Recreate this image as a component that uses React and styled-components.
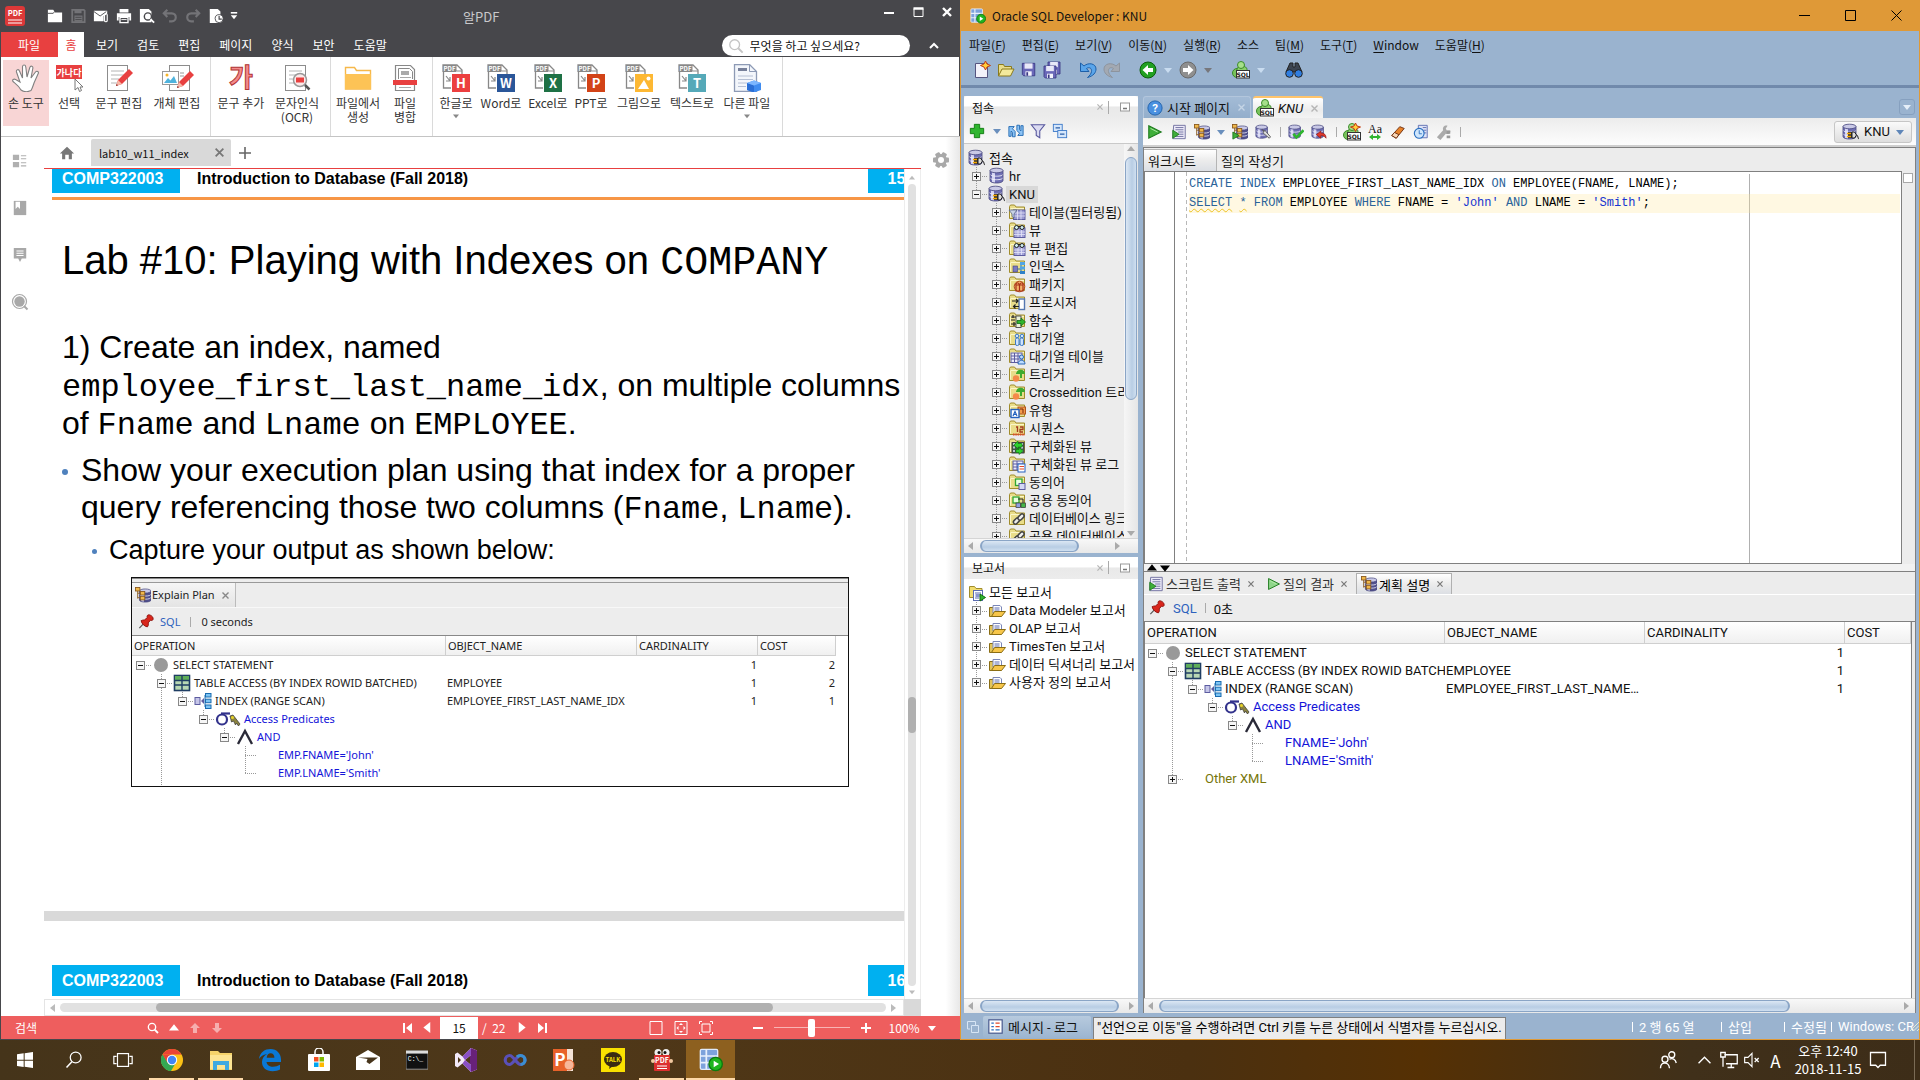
import React from 'react';
import styled, { createGlobalStyle, css } from 'styled-components';

const ui = '"Noto Sans CJK KR", "Noto Sans", sans-serif';
const swing = 'Roboto, "Noto Sans CJK KR", sans-serif';
const doc = '"Liberation Sans", Arial, sans-serif';
const mono = '"Liberation Mono", "Courier New", monospace';

const steel = '#9ab3cf';
const panel = '#ececec';
const line = '#808080';

const GlobalStyle = createGlobalStyle`
  *, *::before, *::after { box-sizing: border-box; }
  body { margin: 0; font-family: ${ui}; font-size: 13px; color: #111; overflow: hidden; }
  button, input, select { font: inherit; color: inherit; margin: 0; }
  button { background: none; border: 0; padding: 0; }
  svg { display: block; flex: none; }
`;

/* ---------- shared ---------- */

const Desktop = styled.div`
  height: 100vh;
  display: grid;
  grid-template-rows: minmax(0, 1fr) 40px;
`;

const Windows = styled.main`
  display: grid;
  grid-template-columns: minmax(0, 1fr) minmax(0, 1fr);
  grid-template-rows: minmax(0, 1fr);
  min-height: 0;
`;

const IconButton = styled.button`
  display: flex;
  align-items: center;
  justify-content: center;
  flex: none;
  width: ${(p) => p.$w || 24}px;
  height: 20px;
`;

const Glyph = ({ s = 18, w, h, box, children }) => (
  <svg width={w || s} height={h || s} viewBox={box || '0 0 18 18'} fill="none" aria-hidden="true">
    {children}
  </svg>
);

const Tri = ({ dir = 'down', c = '#fff', s = 8 }) => {
  const d = {
    down: 'M0 2h8L4 7z',
    up: 'M0 6h8L4 1z',
    left: 'M6 0v8L1 4z',
    right: 'M2 0v8l5-4z',
  }[dir];
  return (
    <svg width={s} height={s} viewBox="0 0 8 8" aria-hidden="true">
      <path d={d} fill={c} />
    </svg>
  );
};

/* ---------- PDF viewer ---------- */

const PdfWindow = styled.section`
  display: grid;
  grid-template-rows: 32px 25px 80px minmax(0, 1fr) 23px;
  background: #fff;
  border: solid #47474b;
  border-width: 0 1px 1px;
  min-width: 0;
  min-height: 0;
`;

const PdfTitle = styled.header`
  display: grid;
  grid-template-columns: 1fr auto 1fr;
  align-items: center;
  background: #47474b;
  color: #c9c9cb;
`;

const QuickBar = styled.div`
  display: flex;
  align-items: center;
  padding-left: 4px;
`;

const Logo = styled.span`
  display: flex;
  margin-right: 18px;
`;

const WindowButtons = styled.div`
  display: flex;
  justify-content: flex-end;
  padding: 0 1px 8px 0;
`;

const PdfMenu = styled.nav`
  display: flex;
  background: #47474b;
  color: #fff;
  font-size: 12px;
`;

const MenuTab = styled.button`
  padding: 0 10px 0 9px;
  ${(p) => p.$kind === 'file' && css`width: 57px; background: #e84040;`}
  ${(p) => p.$kind === 'active' && css`width: 26px; padding: 0; margin-right: 3px; background: #fff; color: #e84040;`}
`;

const SearchPill = styled.label`
  display: flex;
  align-items: center;
  gap: 6px;
  width: 188px;
  height: 21px;
  margin: 3px 12px 0 auto;
  padding: 0 6px;
  border-radius: 11px;
  background: #fff;
`;

const SearchInput = styled.input`
  flex: 1;
  min-width: 0;
  height: 20px;
  border: 0;
  padding: 0;
  background: none;
  font-size: 12px;
  &::placeholder { color: #111; opacity: 1; }
`;

const MenuChevron = styled(IconButton)`
  margin: 4px 16px 0 0;
`;

const Ribbon = styled.div`
  display: flex;
  border-bottom: 1px solid #c4c4c4;
`;

const RibbonGroup = styled.div`
  display: flex;
  padding: 3px 5px 0 2px;
  border-right: 1px solid #dadada;
`;

const RibbonItem = styled.button`
  display: flex;
  flex-direction: column;
  align-items: center;
  width: ${(p) => p.$w}px;
  height: 66px;
  padding-top: 4px;
  font-size: 12px;
  line-height: 14px;
  color: #333;
  white-space: pre;
  background: ${(p) => (p.$active ? '#f8d5d5' : 'none')};
  svg { margin-bottom: 4px; }
  svg + svg { margin: 3px 0 0; }
`;

const PdfBody = styled.div`
  display: grid;
  grid-template-columns: 43px minmax(0, 1fr) 41px;
  grid-template-rows: minmax(0, 1fr);
  min-height: 0;
`;

const SideRail = styled.aside`
  display: flex;
  flex-direction: column;
  align-items: center;
  gap: 27px;
  padding: 14px 5px 0 0;
`;

const RightRail = styled.aside`
  display: flex;
  justify-content: center;
  align-items: flex-start;
  padding-top: 13px;
  background: linear-gradient(90deg, #fff 60%, #e4e4e4);
`;

const Reader = styled.div`
  display: grid;
  grid-template-rows: 31px minmax(0, 1fr);
  min-width: 0;
`;

const DocTabs = styled.div`
  display: flex;
  align-items: center;
`;

const DocTab = styled.div`
  display: flex;
  align-items: center;
  justify-content: space-between;
  width: 140px;
  height: 27px;
  padding: 0 5px 0 8px;
  margin-left: 1px;
  background: #d9d9d9;
  border-radius: 2px 2px 0 0;
  font-size: 11px;
`;

const ReaderView = styled.div`
  display: grid;
  grid-template-columns: minmax(0, 1fr) 17px;
  grid-template-rows: minmax(0, 1fr) 17px;
  border-top: 1px solid #e84040;
  min-height: 0;
`;

const Pages = styled.div`
  display: flex;
  flex-direction: column;
  gap: 10px;
  background: #d9d9d9;
  overflow: hidden;
`;

const Page = styled.article`
  flex: ${(p) => (p.$last ? '0 0 78px' : '1 1 0')};
  min-height: 0;
  overflow: hidden;
  padding-left: 8px;
  padding-top: ${(p) => (p.$last ? 44 : 0)}px;
  background: #fff;
  color: #000;
  font-family: ${doc};
`;

const SlideHeader = styled.header`
  display: grid;
  grid-template-columns: 128px 1fr 36px;
  align-items: center;
  height: ${(p) => (p.$tall ? 31 : 24)}px;
  font-size: 16px;
  line-height: 20px;
  font-weight: bold;
`;

const CourseTag = styled.span`
  height: 100%;
  padding: ${(p) => (p.$tall ? 6 : 0)}px 0 0 ${(p) => (p.$page ? 20 : 10)}px;
  background: #00b0f0;
  color: #fff;
  overflow: hidden;
`;

const CourseTitle = styled.span`
  padding-left: 17px;
  padding-bottom: ${(p) => (p.$tall ? 0 : 4)}px;
`;

const SlideBody = styled.div`
  border-top: 3px solid #f79646;
  margin-top: 4px;
  padding: 36px 0 0 10px;
  font-size: 32px;
  line-height: 37px;
  white-space: nowrap;
`;

const SlideTitle = styled.h1`
  margin: 0 0 44px;
  font-size: 40px;
  line-height: 48px;
  font-weight: normal;
`;

const SlideText = styled.p`
  margin: 0 0 10px;
  line-height: 38px;
`;

const Code = styled.code`
  font-family: ${mono};
  line-height: 1;
`;

const Bullets = styled.ul`
  list-style: none;
  margin: 0;
  padding: 0;
`;

const Bullet = styled.li`
  display: flex;
  align-items: flex-start;
  gap: ${(p) => (p.$sub ? 12 : 13)}px;
  ${(p) => p.$sub && css`margin: 8px 0 0 30px; font-size: 27px; line-height: 32px;`}
  &::before {
    content: '';
    flex: none;
    width: ${(p) => (p.$sub ? 5 : 6)}px;
    height: ${(p) => (p.$sub ? 5 : 6)}px;
    margin-top: ${(p) => (p.$sub ? 15 : 17)}px;
    border-radius: 50%;
    background: #4f81bd;
  }
`;

const Figure = styled.figure`
  width: 718px;
  height: 210px;
  margin: 11px 0 0 69px;
  overflow: hidden;
  border: 1px solid #111;
  background: #fff;
  font: 11px/18px "Noto Sans", sans-serif;
  color: #222;
`;

const FigureTabs = styled.div`
  display: flex;
  height: 30px;
  padding-top: 5px;
  background: linear-gradient(#888 0 1px, #ededed 1px 4px, #999 4px 5px, #ededed 5px);
  border-bottom: 1px solid #f8f8f8;
`;

const FigureTab = styled.div`
  display: flex;
  align-items: center;
  gap: 1px;
  padding: 0 6px 0 3px;
  border: 1px solid #bbb;
  border-width: 0 1px 0 0;
  background: linear-gradient(#f6f6f6, #e4e4e4);
  button { margin-left: 6px; }
`;

const FigureBar = styled.div`
  display: flex;
  align-items: center;
  gap: 6px;
  height: 28px;
  padding-left: 6px;
  background: #ededed;
  border-bottom: 1px solid #888;
`;

const VScroll = styled.div`
  display: flex;
  flex-direction: column;
  align-items: center;
  justify-content: space-between;
  padding: 6px 0 4px;
  gap: 3px;
  background: #fff;
  border: 1px solid #ededed;
  border-width: 0 1px;
`;

const HScroll = styled.div`
  display: flex;
  align-items: center;
  gap: 3px;
  padding: 0 6px 0 4px;
  border: 1px solid #e4e4e4;
`;

const Track = styled.div`
  display: flex;
  flex: 1;
  border-radius: 5px;
  background: #e1e1e1;
  ${(p) => (p.$vertical ? css`width: 8px; flex-direction: column;` : css`height: 9px;`)}
`;

const Before = styled.i`flex: ${(p) => p.$n} 0 0;`;

const Thumb = styled.div`
  flex: ${(p) => p.$n} 0 0;
  border-radius: 5px;
  background: #b0b0b0;
`;

const Corner = styled.div`background: #d9d9d9;`;

const PdfStatus = styled.footer`
  display: flex;
  align-items: center;
  background: #ee5e5e;
  color: #fff;
  font-size: 12px;
  padding: 0 26px 0 14px;
  white-space: nowrap;
`;

const StatusGroup = styled.div`
  display: flex;
  align-items: center;
  gap: ${(p) => p.$gap || 0}px;
  margin-left: ${(p) => p.$left || 0}px;
`;

const PageBox = styled.input`
  width: 38px;
  height: 22px;
  border: 0;
  padding: 0;
  margin: 0 4px;
  text-align: center;
  background: #fff;
  color: #111;
`;

const Zoom = styled.input`
  appearance: none;
  width: 76px;
  height: 18px;
  margin: 0 6px;
  background: linear-gradient(#f9b4b4, #f9b4b4) center / 100% 1px no-repeat;
  &::-webkit-slider-thumb { appearance: none; width: 7px; height: 18px; border-radius: 2px; background: #fff; }
`;

/* ---------- SQL Developer ---------- */

const SqlWindow = styled.section`
  display: grid;
  grid-template-rows: 31px 26px 31px minmax(0, 1fr) 25px;
  border: 1px solid #df9937;
  border-top: 0;
  background: ${steel};
  font-family: ${swing};
  min-width: 0;
  min-height: 0;
`;

const SqlTitle = styled.header`
  display: flex;
  align-items: center;
  gap: 6px;
  padding-left: 9px;
  background: #df9937;
  font-family: ${ui};
  font-size: 12px;
`;

const TitleButtons = styled.div`
  display: flex;
  margin-left: auto;
`;

const SqlMenu = styled.nav`
  display: flex;
  font-family: ${ui};
  font-size: 12px;
`;

const SqlMenuItem = styled.button`
  padding: 0 8px;
  u { text-underline-offset: 2px; }
`;

const MainTools = styled.div`
  display: flex;
  align-items: center;
  padding: 0 0 2px 9px;
  border-bottom: 3px solid #8399b8;
  border-image: linear-gradient(${steel}, #7089ab) 1;
`;

const Gap = styled.i`width: ${(p) => p.$w}px;`;

const SqlBody = styled.div`
  display: grid;
  grid-template-columns: 174px minmax(0, 1fr);
  grid-template-rows: minmax(0, 1fr);
  gap: 5px;
  padding: 8px 1px 1px 3px;
  min-height: 0;
`;

const Docks = styled.div`
  display: grid;
  grid-template-columns: minmax(0, 1fr);
  grid-template-rows: minmax(0, 1fr) minmax(0, 1fr);
  gap: 4px;
  min-height: 0;
`;

const Dock = styled.section`
  display: flex;
  flex-direction: column;
  min-height: 0;
  background: ${(p) => (p.$light ? '#fff' : panel)};
`;

const DockHeader = styled.header`
  display: flex;
  align-items: center;
  flex: none;
  height: 22px;
  padding: 0 2px 0 8px;
  border-radius: 3px 3px 0 0;
  background: linear-gradient(#fff 45%, #e9e9e9 50%, #ececec);
`;

const DockTitle = styled.h2`
  flex: 1;
  margin: 0;
  font-size: 12px;
  font-weight: normal;
`;

const DockTools = styled.div`
  display: flex;
  align-items: center;
  flex: none;
  height: 26px;
  padding-left: 1px;
  background: linear-gradient(#ececec, #fafafa);
  border-bottom: 1px solid #c9c9c9;
`;

const DockBody = styled.div`
  flex: 1;
  display: flex;
  min-height: 0;
`;

const Tree = styled.ul`
  flex: 1;
  min-width: 0;
  margin: 0;
  padding: 5px 0 0;
  list-style: none;
  overflow: hidden;
`;

const TreeRow = styled.li`
  display: flex;
  align-items: center;
  height: 18px;
  padding-left: ${(p) => p.$pad}px;
  white-space: nowrap;
`;

const TreeLabel = styled.span`
  margin-left: ${(p) => p.$gap || 0}px;
  padding: 0 ${(p) => (p.$selected ? 3 : 0)}px;
  line-height: 17px;
  background: ${(p) => (p.$selected ? '#d8d8d8' : 'none')};
`;

const dots = 'repeating-linear-gradient(#999 0 1px, transparent 1px 2px)';
const hdots = 'repeating-linear-gradient(90deg, #999 0 1px, transparent 1px 2px)';

const Branch = styled.span`
  display: flex;
  align-items: center;
  flex: none;
  width: 16px;
  height: 18px;
  background-repeat: no-repeat;
  background-image: ${dots}, ${hdots};
  background-size: 1px ${(p) => ({ full: 18, top: 9, none: 0 }[p.$line])}px, 12px 1px;
  background-position: 4px 0, 4px 9px;
`;

const Guide = styled.span`
  flex: none;
  width: ${(p) => p.$w || 20}px;
  height: 18px;
  background: ${(p) => (p.$on ? dots : 'none')} 4px 0 / 1px 100% no-repeat;
`;

const Expander = styled.button`
  display: flex;
  flex: none;
  width: 9px;
  height: 9px;
  background: #fff;
`;

const JavaScroll = styled.div`
  display: flex;
  flex: none;
  align-items: center;
  justify-content: space-between;
  gap: 4px;
  ${(p) =>
    p.$vertical
      ? css`flex-direction: column; width: 14px; padding: 1px 0; background: linear-gradient(90deg, #f6f6f6, #e6e6e6);`
      : css`height: 15px; padding: 0 ${p.$end || 3}px 0 3px; background: linear-gradient(#f8f8f8, #e8e8e8); border-top: 1px solid #d5d5d5;`}
`;

const JavaTrack = styled.div`
  display: flex;
  flex: 1;
  ${(p) => (p.$vertical ? css`flex-direction: column; width: 12px;` : css`height: 12px;`)}
`;

const JavaThumb = styled.div`
  flex: ${(p) => p.$n} 0 0;
  border: 1px solid #8aa5c6;
  border-width: ${(p) => (p.$vertical ? '1px 1px' : '1px 2px')};
  border-radius: 7px;
  background: linear-gradient(${(p) => (p.$vertical ? '90deg' : '180deg')}, #dbe7f4, #b8cde4 60%, #cfdff0);
`;

const Work = styled.div`
  display: flex;
  flex-direction: column;
  min-width: 0;
  min-height: 0;
`;

const FileTabs = styled.div`
  display: flex;
  flex: none;
  gap: 2px;
  height: 22px;
`;

const FileTab = styled.div`
  display: flex;
  align-items: center;
  gap: 4px;
  padding: 0 5px 0 3px;
  font-style: ${(p) => (p.$active ? 'italic' : 'normal')};
  border: 1px solid #b3c6dc;
  border-width: 1px 1px 0;
  border-radius: 3px 3px 0 0;
  background: linear-gradient(#a3bbd6, #93aecb);
  ${(p) => p.$active && css`
    border: 0;
    border-top: 2px solid #ffc46b;
    background: linear-gradient(#fff, #ececec 60%, #f4f4f4);
  `}
  button { margin-left: 4px; }
`;

const TabMenu = styled(IconButton)`
  margin: 3px 3px 0 auto;
  width: 16px;
  height: 16px;
  border: 1px solid #86a0bf;
  border-radius: 3px;
`;

const WorkBox = styled.div`
  flex: 1;
  display: flex;
  flex-direction: column;
  min-height: 0;
  margin-right: 2px;
  background: ${panel};
`;

const EditTools = styled.div`
  display: flex;
  align-items: center;
  height: 29px;
  flex: none;
  padding: 0 4px 0 0;
  background: linear-gradient(#ececec, #fdfdfd);
  border-bottom: 2px solid #cfcfcf;
`;

const Rule = styled.i`
  flex: none;
  width: 1px;
  height: ${(p) => p.$h || 10}px;
  background: ${(p) => p.$c || '#aaa'};
  margin: 0 ${(p) => p.$m || 0}px;
`;

const ConnPicker = styled.label`
  display: flex;
  align-items: center;
  gap: 4px;
  width: 78px;
  height: 22px;
  margin-left: auto;
  padding: 0 7px;
  border: 1px solid #c6c6c6;
  border-radius: 3px;
  background: linear-gradient(#fafafa, #dedede);
`;

const ConnSelect = styled.select`
  appearance: none;
  flex: 1;
  min-width: 0;
  border: 0;
  padding: 0;
  background: none;
`;

const Frame = styled.div`
  flex: 1;
  display: grid;
  grid-template-columns: minmax(0, 1fr);
  grid-template-rows: minmax(0, 416fr) 8px minmax(0, 440fr);
  min-height: 0;
  border: 1px solid ${line};
`;

const Worksheet = styled.section`
  display: grid;
  grid-template-rows: 23px minmax(0, 1fr);
  min-height: 0;
`;

const SubTabs = styled.div`
  display: flex;
  align-items: flex-end;
`;

const SubTab = styled.button`
  width: ${(p) => p.$w}px;
  height: 22px;
  padding-left: 4px;
  text-align: left;
  ${(p) => p.$active && css`
    border: 1px solid #b5b5b5;
    border-width: 1px 1px 0 0;
    background: linear-gradient(#fff, #ececec 50%, #dcdfe4);
  `}
`;

const EditorRow = styled.div`
  display: grid;
  grid-template-columns: minmax(0, 1fr) 13px;
  min-height: 0;
`;

const Editor = styled.div`
  display: grid;
  grid-template-columns: 30px minmax(0, 1fr);
  border: 1px solid ${line};
  background: #fff;
`;

const Gutter = styled.div`border-right: 1px solid ${line};`;

const Script = styled.div`
  padding: 3px 1px 0 14px;
  overflow: hidden;
  outline: 0;
  font: 12px/19px ${mono};
  white-space: pre;
  color: #000;
  background:
    repeating-linear-gradient(#b8b8b8 0 4px, transparent 4px 7px) 11px 0 / 1px 100% no-repeat,
    linear-gradient(#b0b0b0, #b0b0b0) 574px 2px / 1px 100% no-repeat;
`;

const CodeLine = styled.div`
  height: 19px;
  background: ${(p) => (p.$current ? 'rgba(255, 230, 150, 0.28)' : 'none')};
`;

const Kw = styled.span`
  color: #2a6399;
  text-decoration: ${(p) => (p.$warn ? 'underline wavy #ecc223 1px' : 'none')};
  text-underline-offset: 2px;
`;

const Str = styled.span`color: #1634d0;`;

const Ruler = styled.div`
  padding: 2px 0 0 1px;
  &::before {
    content: '';
    display: block;
    width: 10px;
    height: 10px;
    border: 1px solid #a8a8a8;
    background: #fff;
  }
`;

const Splitter = styled.div`
  display: flex;
  align-items: center;
  gap: 3px;
  padding-left: 3px;
  background: #f2f2f2;
  border-bottom: 1px solid ${line};
`;

const Results = styled.section`
  display: grid;
  grid-template-rows: 23px 27px minmax(0, 1fr) 14px;
  min-height: 0;
`;

const ResultTabs = styled.div`
  display: flex;
  align-items: stretch;
  border-bottom: 1px solid #fff;
  padding-top: 1px;
`;

const ResultTab = styled.div`
  display: flex;
  align-items: center;
  gap: 2px;
  padding: 0 8px 0 4px;
  color: ${(p) => (p.$active ? '#000' : '#333')};
  border-right: 1px solid ${(p) => (p.$active ? '#b0b0b0' : 'transparent')};
  ${(p) => p.$active && css`
    border: 1px solid #b0b0b0;
    border-bottom: 0;
    background: linear-gradient(#fff, #ececec 50%, #dcdfe4);
  `}
  button { margin-left: 5px; }
`;

const ResultTools = styled.div`
  display: flex;
  align-items: center;
  gap: 8px;
  padding-left: 5px;
  border-bottom: 1px solid ${line};
`;

const TextLink = styled.a`
  color: #2d62bd;
  text-decoration: none;
`;

const TableView = styled.div`
  overflow: hidden;
  margin-right: 3px;
  background: #fff;
  border: 1px solid ${line};
  border-width: 0 1px;
`;

const PlanTable = styled.table`
  width: ${(p) => (p.$small ? '704px' : '100%')};
  table-layout: fixed;
  border-collapse: separate;
  border-spacing: 0;
  th {
    height: ${(p) => (p.$small ? 20 : 22)}px;
    padding: 0 2px;
    text-align: left;
    font-weight: normal;
    border: 1px solid #cfcfcf;
    border-width: 0 1px 1px 0;
    background: linear-gradient(#fff, #f0f0f0);
    line-height: 16px;
  }
  td {
    height: 18px;
    padding: 0 6px 0 1px;
    line-height: 18px;
    white-space: nowrap;
    overflow: hidden;
    text-overflow: ellipsis;
  }
  td:first-child { padding: 0 0 0 ${(p) => (p.$small ? 4 : 3)}px; text-overflow: clip; }
  td:nth-child(n + 3) { text-align: right; padding-right: 1px; }
`;

const Col = styled.col`width: ${(p) => p.$w};`;

const PlanCell = styled.div`
  display: flex;
  align-items: center;
  height: 18px;
  overflow: hidden;
  color: ${(p) => p.$tone || 'inherit'};
`;

const PlanIcon = styled.span`
  display: flex;
  flex: none;
  width: ${(p) => p.$w}px;
`;

const SqlStatus = styled.footer`
  display: flex;
  align-items: center;
  color: #fff;
  white-space: nowrap;
`;

const LogButton = styled.button`
  display: flex;
  align-items: center;
  gap: 5px;
  width: 108px;
  height: 22px;
  margin: 0 2px 0 4px;
  padding-left: 5px;
  border-radius: 2px;
  background: linear-gradient(#b7cade, #9cb5d0);
  color: #111;
`;

const Hint = styled.output`
  align-self: flex-end;
  height: 22px;
  padding: 0 3px;
  border: 1px solid ${line};
  border-bottom: 0;
  background: ${panel};
  color: #000;
  line-height: 20px;
`;

const StatusCells = styled.div`
  display: flex;
  margin-left: auto;
`;

const StatusCell = styled.span`
  display: flex;
  align-items: center;
  gap: 6px;
  width: ${(p) => p.$w}px;
`;

/* ---------- taskbar ---------- */

const Taskbar = styled.nav`
  display: flex;
  align-items: stretch;
  background: linear-gradient(90deg, #45341a, #4f3819 30%, #4b3010 62%, #553004 74%, #40301a 88%, #3d2d18);
`;

const TaskButton = styled.button`
  display: flex;
  align-items: center;
  justify-content: center;
  width: 49px;
  padding-top: 2px;
  border-bottom: 2px solid transparent;
  ${(p) => p.$open && css`border-image: linear-gradient(90deg, transparent 4px, #fed9a8 4px 45px, transparent 45px) 2;`}
  ${(p) => p.$active && css`background: #8d601f; border-image: none; border-bottom-color: #fed9a8;`}
`;

const Tray = styled.div`
  display: flex;
  align-items: center;
  margin-left: auto;
  color: #fff;
`;

const TrayButton = styled.button`
  display: flex;
  justify-content: center;
  width: ${(p) => p.$w}px;
  font-size: ${(p) => (p.$big ? 17 : 13)}px;
`;

const Clock = styled.time`
  width: 82px;
  text-align: center;
  font-size: 13px;
  line-height: 18px;
`;

const ShowDesktop = styled.button`
  align-self: stretch;
  width: 6px;
  margin-left: 27px;
  border-left: 1px solid #7a6b55;
`;

/* ---------- drawings ---------- */

const CloseX = ({ c = '#888', s = 7 }) => (
  <svg width={s} height={s} viewBox="0 0 7 7" aria-hidden="true"><path d="M.5.5l6 6m0-6l-6 6" stroke={c} strokeWidth="1.4" /></svg>
);

const Box = ({ open }) => (
  <svg width="9" height="9" viewBox="0 0 9 9" aria-hidden="true">
    <rect x=".5" y=".5" width="8" height="8" fill="#f6f6f6" stroke="#888" />
    <path d={open ? 'M2 4.5h5' : 'M2 4.5h5M4.5 2v5'} stroke="#111" />
  </svg>
);

const Cyl = ({ x = 2, y = 1, c = '#6f6fb4' }) => (
  <g transform={`translate(${x} ${y})`}>
    <path d="M0 2.500v10C0 14 3 15 6.500 15S13 14 13 12.500v-10z" fill={c} />
    <path d="M2 4v10.200c1 .5 2 .7 3 .8V4z" fill="#d5d5f2" />
    <path d="M0 6c0 1.500 3 2.200 6.500 2.200S13 7.500 13 6M0 9.500c0 1.500 3 2.200 6.500 2.200S13 11 13 9.500" stroke="#f0f0fb" strokeWidth=".9" />
    <path d="M0 2.500v10C0 14 3 15 6.500 15S13 14 13 12.500v-10" stroke="#44447c" strokeWidth=".8" />
    <ellipse cx="6.500" cy="2.500" rx="6.500" ry="2.300" fill="#c9c9e6" stroke="#44447c" strokeWidth=".8" />
  </g>
);
const Plug = () => (
  <g><rect x="6" y="9" width="7" height="6" fill="#333" /><path d="M5 10.500h4M5 13.500h4" stroke="#f6a800" strokeWidth="1.300" /><path d="M10 9h2.500l2 3-2 3H10z" fill="#ddd" stroke="#222" /><path d="M14.500 12c2 0 1 4 2.500 4" stroke="#222" /></g>
);
const DbIcon = () => <Glyph><Cyl /></Glyph>;
const DbPlug = () => <Glyph><Cyl x={1} /><Plug /></Glyph>;
const SqlTag = ({ y = 9 }) => (
  <g><rect x="4.500" y={y + 0.5} width="13" height="7.500" fill="#fff" stroke="#333" /><text x="11" y={y + 6.7} fontSize="6" fontWeight="bold" fontStyle="normal" fontFamily="DejaVu Sans" textAnchor="middle" fill="#222">SQL</text></g>
);
const GreenDb = () => (
  <g><ellipse cx="5" cy="12" rx="4.500" ry="4.500" fill="#79c35c" stroke="#3a8a2a" /><ellipse cx="10" cy="8.500" rx="5" ry="3.500" fill="#8bd06c" stroke="#3a8a2a" /><circle cx="9" cy="4" r="3.500" fill="#a6e08a" stroke="#3a8a2a" /></g>
);
const SqlIcon = ({ star }) => <Glyph><GreenDb /><SqlTag />{star && <path d="M12.500 0l1.500 3 3.500 1-3.500 1.500-1.500 3-1.500-3L7.500 4 11 3z" fill="#ffcf3a" stroke="#c43a12" />}</Glyph>;

const overlays = {
  table: <g><rect x="5.500" y="7" width="11.500" height="9.500" fill="#9a9ad2" stroke="#5c5ca0" /><path d="M5.500 10H17M5.500 13H17M9.500 7v9.500M13 7v9.500" stroke="#e5e5f8" strokeWidth=".8" /><path d="M1 7h8l-3 4v4l-2-1.500V11z" fill="#c8d2e6" stroke="#4c5a7c" strokeWidth=".7" /></g>,
  view: <g><rect x="6" y="7" width="11" height="9.500" fill="#a5a5da" stroke="#5c5ca0" /><path d="M6 11h11M6 13.500h11M10 9v7M13.500 9v7" stroke="#e5e5f8" strokeWidth=".8" /><circle cx="8.500" cy="6.500" r="2" fill="#cfeef0" stroke="#222" /><circle cx="14" cy="6.500" r="2" fill="#cfeef0" stroke="#222" /><path d="M10 5.500h2.500" stroke="#222" /></g>,
  index: <g><rect x="5" y="9" width="4.500" height="6" fill="#7a7ac0" stroke="#44447c" strokeWidth=".6" /><path d="M9.500 12H13M13 7v9" stroke="#2e6ea8" /><rect x="12" y="5" width="5" height="3" fill="#4fa5e6" /><rect x="12" y="9.500" width="5" height="3" fill="#4fa5e6" /><rect x="12" y="14" width="5" height="3" fill="#2e80c8" /></g>,
  pack: <g><circle cx="11.500" cy="11.500" r="5.300" fill="#f4b36a" stroke="#b04a1c" /><path d="M8 10h7v6H8zM11.500 9v7M7.500 10c1-3 3-3 4 0 1-3 3-3 4 0" stroke="#a8321a" strokeWidth="1.200" /></g>,
  proc: <g><rect x="11" y="6" width="5.500" height="10.500" fill="#fff" stroke="#5577b0" strokeWidth="1.400" /><path d="M4 8h6m-2-2l2 2-2 2M11 13.500H5.500m2-2l-2 2 2 2" stroke="#222" strokeWidth="1.200" /></g>,
  func: <g><rect x="8" y="5" width="5" height="11.500" fill="#e9efd8" stroke="#555" /><path d="M3 6h5M3 9h4M3 13h5M5 4v3M6 11v4" stroke="#222" strokeWidth="1.200" /><path d="M9 9.500h4V7l4.500 4-4.500 4v-2.500H9z" fill="#2fb52f" stroke="#156b15" strokeWidth=".8" /></g>,
  queue: <g fill="#cfe3fb" stroke="#3a78c8"><circle cx="9" cy="7" r="1.800" /><circle cx="14" cy="7" r="1.800" /><rect x="7.500" y="9" width="3.500" height="7.500" rx="1.500" /><rect x="12" y="9" width="3.500" height="7.500" rx="1.500" /></g>,
  qtable: <g><rect x="3" y="6" width="11" height="9.500" fill="#eaeafa" stroke="#5c5ca0" /><path d="M3 9h11M3 12h11M6.500 6v9.500M10 6v9.500" stroke="#5c5ca0" /><circle cx="13.500" cy="10" r="2" fill="#bcdcff" stroke="#2a68b8" /><path d="M10 17c0-5 7-5 7 0z" fill="#bcdcff" stroke="#2a68b8" /></g>,
  trig: <g><path d="M8 9c0-5 9-6 9 0z" fill="#3eab2f" /><rect x="12" y="9" width="2" height="4" fill="#3eab2f" /><circle cx="8" cy="13.500" r="3.200" fill="#f58a4a" /></g>,
  type: <g><rect x="10" y="6" width="7.500" height="7" fill="#f29a4a" stroke="#b0541c" /><path d="M12 8h3v4" stroke="#7a2a0a" /><rect x="3" y="8.500" width="8" height="8" fill="#fff" stroke="#2461c0" strokeWidth="1.400" /><path d="M5 15l2-4.500L9 15m-3.300-1.500h2.600" stroke="#2461c0" strokeWidth="1.200" /></g>,
  seq: <g><path d="M8 8h1.500v5M12 8h3v2.500h-3V13h3" stroke="#a33a1c" strokeWidth="1.300" /><path d="M5 15.500h12" stroke="#e0482a" strokeWidth="2" strokeDasharray="1.500 .8" /></g>,
  mview: <g><rect x="4" y="5.500" width="12" height="10.500" fill="#3d5c46" stroke="#444" /><path d="M6 6v9M14 6v9" stroke="#dfe8f8" strokeWidth="1.500" strokeDasharray="2 1.500" /><path d="M6 8l4-4v2.500h4V10h-4v2z" fill="#2fd02f" stroke="#0d7a0d" strokeWidth=".6" /><path d="M15 14l-4 3.500v-2H8v-3h3v-2z" fill="#2fd02f" stroke="#0d7a0d" strokeWidth=".6" /></g>,
  mlog: <g><rect x="5" y="6" width="10" height="9" fill="#e9e9fb" stroke="#5c5ca0" /><path d="M5 9h10M5 12h10M9 6v9" stroke="#5c5ca0" /><rect x="10" y="9" width="7" height="8" fill="#fff" stroke="#2461c0" /><path d="M11.500 11.500H16M11.500 14H16" stroke="#e0482a" strokeWidth="1.200" /></g>,
  syn: <g><rect x="7.500" y="6" width="6.500" height="6.500" fill="#e8ffe0" stroke="#2fa52f" strokeWidth="1.300" /><rect x="11" y="10.500" width="6" height="6" fill="#d5d8f5" stroke="#5c5ca0" /></g>,
  psyn: <g><rect x="5" y="6" width="6" height="6" fill="#e8ffe0" stroke="#2fa52f" strokeWidth="1.300" /><path d="M10 8h5v4" stroke="#222" /><rect x="8" y="12" width="4.500" height="4.500" fill="#8fa0e0" stroke="#333" strokeWidth=".7" /><rect x="13" y="12" width="4.500" height="4.500" fill="#46b546" stroke="#333" strokeWidth=".7" /></g>,
  link: <g stroke="#444" strokeWidth="1.500"><rect x="5" y="10" width="7" height="4" rx="2" transform="rotate(-45 8.500 12)" fill="#eee" /><rect x="9.500" y="6" width="7" height="4" rx="2" transform="rotate(-45 13 8)" fill="#eee" /></g>,
};

const Folder = ({ kind }) => (
  <Glyph>
    <path d="M1.500 15.500v-12l1-1.500h4l1.500 2h8.500v11.500z" fill="#e9dd8a" stroke="#a08c2c" />
    <path d="M2.500 5.500v9M3 5.500h13" stroke="#fbf6c8" />
    {overlays[kind]}
  </Glyph>
);

const ReportFolder = () => (
  <Glyph>
    <path d="M1.500 14.500v-9h5l1 1.500h6v7z" fill="#e3c55a" stroke="#8a6d14" />
    <path d="M5 3.500h7l1.500 1.500v6H5z" fill="#fff" stroke="#7a86b8" /><path d="M6.500 6h5M6.500 8h5" stroke="#5b6bb0" />
    <path d="M3.500 14.500l3-5h11l-4 5z" fill="#f7c64a" stroke="#8a6d14" />
  </Glyph>
);
const AllReports = () => (
  <Glyph>
    <path d="M1.500 13.500v-11h5l1.500 2h6v9z" fill="#f2dd6e" stroke="#a08c2c" />
    <rect x="5.500" y="6.500" width="9" height="10" fill="#fff" stroke="#5b6bb0" /><path d="M7 9h6M7 14h4" stroke="#5b6bb0" /><rect x="7.500" y="10" width="4" height="3" fill="#8a94d0" />
    <path d="M12 10l5.500 3.500L12 17z" fill="#2fb52f" stroke="#0d6b0d" />
  </Glyph>
);

const Run = ({ s = 18, c = '#3fae3a' }) => <Glyph s={s}><path d="M2 2l14 7-14 7z" fill={c} stroke="#1d7a1d" strokeWidth="1.200" /><path d="M4 5l8 4" stroke="#b8efae" /></Glyph>;
const ScriptIcon = ({ s = 18 }) => (
  <Glyph s={s}><path d="M3 1.500h13v15H2z" fill="#eceaf8" stroke="#6a6a9c" /><path d="M5 4h9M5 6.500h9M8 9h6M9 11.500h5M5 14h9" stroke="#6a6a9c" /><path d="M2 7l7 4.500L2 16z" fill="#3fae3a" stroke="#1d7a1d" /></Glyph>
);
const PlanIco = ({ play, s = 18 }) => (
  <Glyph s={s}>
    <Cyl x={5} y={2} c="#50508c" />
    <path d="M3 4v9M3 7h5M3 12h5" stroke="#8a5a20" /><rect x=".5" y=".5" width="5" height="4" fill="#f0b84a" stroke="#8a5a20" /><rect x="6" y="5" width="5" height="4" fill="#f0b84a" stroke="#8a5a20" /><rect x="6" y="10.500" width="5" height="4" fill="#f0b84a" stroke="#8a5a20" />
    {play && <path d="M1 9l7 4-7 4z" fill="#3fae3a" stroke="#1d7a1d" />}
  </Glyph>
);
const Pin = () => (
  <Glyph s={16}><path d="M1.500 16l5-5.500" stroke="#555" strokeWidth="1.300" /><path d="M3.500 7.500c2-1 3.500-.5 4-1L10.500 4C9.500 2 11 .5 13 1c2.500.5 4.500 3 4 5-.500 1.500-2 1.500-3 1l-2.500 3c.5 2 0 3.500-1 4.500-3-.5-6.500-3.500-7-7z" fill="#d8261c" stroke="#8a0f0a" /></Glyph>
);
const Disk = ({ x = 1.5, y = 1.5, s = 14 }) => (
  <g transform={`translate(${x} ${y}) scale(${s / 14})`}><path d="M0 0h14v14H1.500L0 12.500z" fill="#6a68b8" stroke="#3a3884" /><rect x="2.500" y="0" width="9" height="6" fill="#e8e8f8" /><rect x="3.500" y="9" width="7" height="5" fill="#f4f4fc" /><rect x="4.500" y="10" width="2" height="4" fill="#3a3884" /></g>
);
const Round = ({ c, d, left }) => (
  <Glyph><circle cx="9" cy="9" r="8" fill={c} stroke={d} /><path d={left ? 'M3.500 9L9 4v3h5v4H9v3z' : 'M14.500 9L9 4v3H4v4h5v3z'} fill="#fff" /></Glyph>
);
const Curl = ({ c, d, flip }) => (
  <Glyph><path transform={flip ? 'matrix(-1 0 0 1 18 0)' : undefined} d="M1.500 2v8.500H10L7.500 7.500c3-2 5.500 0 5 3-.300 2-1.500 4-4 6 6-1.500 8.500-5 8.500-8.500C17 2.500 9.500 1 5 5z" fill={c} stroke={d} /></Glyph>
);

/* quick access */
const w = '#fff';
const QOpen = () => <Glyph s={16}><path d="M1 16V2h6l2 3h8v11z" fill={w} /><path d="M1 6h6l1.500-2" stroke="#47474b" /></Glyph>;
const QSave = ({ c = '#737377' }) => <Glyph s={16}><path d="M2.500 2h13l1 1v13h-14z" stroke={c} strokeWidth="2" /><path d="M5 2h8v4H5zM5 8.500h9v7H5z" fill={c} /><path d="M6 10.500h7M6 13h7" stroke="#47474b" /></Glyph>;
const QMail = () => <Glyph s={16}><path d="M1 3h15v4l-4 2v6H1z" fill={w} /><path d="M1 4l7 5 7-5" stroke="#47474b" /><path d="M13 8v6a1.500 1.500 0 003 0V7" stroke={w} strokeWidth="1.300" /></Glyph>;
const QPrint = () => <Glyph s={16}><path d="M4 1h10v4H4zM1 6h16v8h-2v-4H3v4H1z" fill={w} /><path d="M4.500 10.500h9v6h-9z" stroke={w} strokeWidth="1.500" /><path d="M6 13h6" stroke={w} /></Glyph>;
const QFind = () => <Glyph s={16}><path d="M1 1h10l3 3v12H1z" fill={w} /><circle cx="10" cy="9.500" r="4" fill={w} stroke="#47474b" strokeWidth="1.600" /><path d="M13 12.500l4 4" stroke={w} strokeWidth="2" /></Glyph>;
const QTurn = ({ flip }) => <Glyph s={16}><path transform={flip ? 'matrix(-1 0 0 1 18 0)' : undefined} d="M6 2L2 6l4 4M2 6h9c6 0 6 9 0 9H8" stroke="#737377" strokeWidth="2.400" /></Glyph>;
const QClock = () => <Glyph s={16}><path d="M2 1h9l3 3v13H2z" fill={w} /><circle cx="12.500" cy="12" r="4.500" fill={w} stroke="#47474b" /><path d="M12.500 9v3.500h3" stroke="#47474b" strokeWidth="1.300" /></Glyph>;
const QMore = () => <Glyph s={8} box="0 0 8 10"><path d="M0 1h8" stroke={w} strokeWidth="2" /><path d="M0 4h8L4 9z" fill={w} /></Glyph>;

/* ribbon drawings share a 28 unit canvas */
const Rib = ({ children, wide = 28 }) => <Glyph w={wide} h={28} box={`0 0 ${wide} 28`}>{children}</Glyph>;
const PaperLines = ({ x = 3 }) => <g stroke="#8c8c8c"><rect x={x + 0.5} y="1.500" width="20" height="25" fill="#fff" /><path d={`M${x + 4} 7h13M${x + 4} 11h13M${x + 4} 15h8M${x + 4} 19h6`} stroke="#b4b4b4" /></g>;
const Pencil = () => <g transform="translate(10 5)"><path d="M1 17l2-6L14 0l4 4L7 15z" fill="#e84040" /><path d="M1 17l2-6 4 4z" fill="#f7b9a8" /><path d="M1 17l.7-2 1.300 1.300z" fill="#7a1c1c" /></g>;
const HandIcon = () => <Rib><path d="M9 26c-2-4-5-6-8-8.500-1.200-1.600.8-3 2.600-2L8 18 4.500 8c-.6-2.400 2.200-3.200 3-1l3 7L10.500 3c0-2.600 3-2.600 3.300 0L15 13l2.800-9.500c.8-2.300 3.600-1.500 3 1L19 14l4.500-6c1.500-1.700 3.700-.2 2.600 1.800L22 19c-1 3-1.500 5-3 7.500-3 1.500-7 1.500-10-.5z" fill="#fff" stroke="#808080" strokeWidth="1.100" /></Rib>;
const SelectIcon = () => <Rib><rect x="1" y="1" width="26" height="14" fill="#e84040" /><text x="14" y="12" fontSize="9" fontWeight="bold" textAnchor="middle" fill="#fff">가나다</text><path d="M20 15v11l3-2.500 1.500 4 2-1-1.500-3.500h3z" fill="#fff" stroke="#777" /></Rib>;
const TextEdit = () => <Rib><PaperLines x={2} /><Pencil /></Rib>;
const ObjEdit = () => <Rib wide={34}><rect x="9.500" y="1.500" width="20" height="25" fill="#fff" stroke="#8c8c8c" /><rect x="2.500" y="7.500" width="16" height="13" fill="#fff" stroke="#999" /><circle cx="7" cy="11" r="1.500" fill="#f6b52a" /><path d="M4 19l4-5 2.500 2.500L14 12l3 7z" fill="#4fb3dd" /><path d="M20 9h4M20 12h4" stroke="#999" /><g transform="translate(6 2)"><Pencil /></g></Rib>;
const TextAdd = () => <Rib><text x="14" y="23" fontSize="26" fontWeight="bold" textAnchor="middle" fill="#f58a8a" stroke="#b03535" strokeWidth="1">가</text></Rib>;
const Ocr = () => <Rib><PaperLines x={2} /><circle cx="17" cy="16" r="6.500" fill="#fbe9e9" stroke="#999" strokeWidth="1.500" /><rect x="13" y="13.500" width="8" height="5" fill="#e84040" /><path d="M22 21l4.500 4.500" stroke="#555" strokeWidth="2.500" /></Rib>;
const FolderBig = () => <Rib><path d="M1.500 25V3.500h9l2 3h14V25z" fill="#fff" stroke="#f6b84a" strokeWidth="1.400" /><path d="M1 10h26v15H1z" fill="#fdc356" /></Rib>;
const Merge = () => <Rib><path d="M4.500 16V1.500h15l4 4V16M4.500 21v5.500h19V21" fill="none" stroke="#888" strokeWidth="1.200" /><path d="M7.500 15V4.500h11l3 3V15" stroke="#888" /><rect x="10" y="7" width="8" height="4" fill="#aaa" /><path d="M9 13.500h11M8 23.500h12" stroke="#aaa" /><rect x="2" y="16" width="24" height="5" fill="#e84040" /></Rib>;
const PdfTo = ({ c, t, pic }) => (
  <Rib>
    <path d="M1 8V1h14l5 5v5M1.500 8v16H9" stroke="#888" strokeWidth="1.300" /><path d="M14 1v6h6" stroke="#888" /><rect x="1" y="1" width="13" height="7" fill="#888" /><text x="7.500" y="7" fontSize="6" fontWeight="bold" textAnchor="middle" fill="#fff">PDF</text>
    <path d="M4 12l4 5m0-4v4H4" stroke="#888" strokeWidth="1.200" />
    <rect x="10" y="10" width="18" height="18" fill={c} />
    {pic ? <g fill="#fff"><path d="M13 25l6-9 5 9z" /><circle cx="23.500" cy="14.500" r="2" /></g> : <text x="19" y="24" fontSize="13" fontWeight="bold" textAnchor="middle" fill="#fff">{t}</text>}
  </Rib>
);
const OtherFile = () => <Rib><path d="M1.500.5h15l7 7v20h-22z" fill="#f3f6fb" stroke="#8d9ab5" strokeWidth="1.300" /><path d="M16.500.5v7h7" stroke="#8d9ab5" /><rect x="5" y="4" width="9" height="3" fill="#77809a" /><path d="M5 12h15M5 15.500h15M5 19h9M5 22.500h8" stroke="#b6c0d4" /><path d="M14 19l7-2.500 7 2.500v7L21 28.500 14 26z" fill="#3f8cf0" /><path d="M14 19l7 2.500v7L14 26z" fill="#2a6fd6" /><path d="M14 19l7-2.500 7 2.500-7 2.500z" fill="#7bb6ff" /></Rib>;

const ribbonGroups = [
  [
    { t: '손 도구', w: 46, i: <HandIcon />, active: true },
    { t: '선택', w: 40, i: <SelectIcon /> },
    { t: '문구 편집', w: 60, i: <TextEdit /> },
    { t: '개체 편집', w: 56, i: <ObjEdit /> },
  ],
  [
    { t: '문구 추가', w: 56, i: <TextAdd /> },
    { t: '문자인식\n(OCR)', w: 56, i: <Ocr /> },
  ],
  [
    { t: '파일에서\n생성', w: 50, i: <FolderBig /> },
    { t: '파일\n병합', w: 44, i: <Merge /> },
  ],
  [
    { t: '한글로', w: 42, i: <PdfTo c="#ec3f3f" t="H" />, more: true },
    { t: 'Word로', w: 48, i: <PdfTo c="#2a5699" t="W" /> },
    { t: 'Excel로', w: 46, i: <PdfTo c="#1e7145" t="X" /> },
    { t: 'PPT로', w: 40, i: <PdfTo c="#d24317" t="P" /> },
    { t: '그림으로', w: 56, i: <PdfTo c="#fdb833" pic /> },
    { t: '텍스트로', w: 50, i: <PdfTo c="#55a9b8" t="T" /> },
    { t: '다른 파일', w: 60, i: <OtherFile />, more: true },
  ],
];

const Glass = ({ s = 16, c = '#b0b0b0', bw = 1.5 }) => <Glyph s={s}><circle cx="7.500" cy="7.500" r="5.500" stroke={c} strokeWidth={bw} /><path d="M11.500 11.500l5 5" stroke={c} strokeWidth={bw * 1.4} /></Glyph>;

/* plan rows */
const Dot = () => <Glyph><circle cx="9" cy="9" r="7" fill="#999" /></Glyph>;
const TableIco = () => <Glyph><rect x="1.500" y="1.500" width="15" height="15" fill="#b9d8b4" stroke="#1f3d63" strokeWidth="1.600" /><rect x="2" y="2" width="14" height="4" fill="#5fae5a" /><path d="M9 2v14M2 6.500h14M2 11h14" stroke="#1f3d63" strokeWidth="1.400" /></Glyph>;
const IndexIco = () => <Glyph><rect x="1" y="5.500" width="5" height="7" fill="#c5c5e8" stroke="#5c5ca0" /><path d="M7 9l3-3v6z" fill="#5c5ca0" /><path d="M11 3v12" stroke="#2277bb" /><g fill="#7cc4f4" stroke="#1a6cb0"><rect x="11.500" y="1.500" width="5.500" height="3.500" /><rect x="11.500" y="7.200" width="5.500" height="3.500" /><rect x="11.500" y="13" width="5.500" height="3.500" /></g></Glyph>;
const SigmaKey = () => <Glyph w={26} h={18} box="0 0 26 18"><circle cx="7" cy="9.500" r="5" stroke="#33338c" strokeWidth="2.200" /><path d="M6 3.500h9" stroke="#33338c" strokeWidth="2.200" /><path d="M15 6l3-1 7 9-1.500 2-2-3-1 2-2-4-2 1z" fill="#8c8440" stroke="#333" strokeWidth=".7" /><circle cx="17.500" cy="7.500" r="1.500" fill="#e8d428" /></Glyph>;
const AndIco = () => <Glyph><path d="M2 16L9 3l7 13" stroke="#2a2a38" strokeWidth="2.400" /></Glyph>;

const blue = '#1414d8';
const planRows = (pre) => [
  { depth: 0, line: 'none', open: true, i: <Dot />, iw: 21, t: 'SELECT STATEMENT' },
  { depth: 1, line: 'full', open: true, i: <TableIco />, iw: 21, t: 'TABLE ACCESS (BY INDEX ROWID BATCHED)' },
  { depth: 2, line: 'top', open: true, i: <IndexIco />, iw: 21, t: 'INDEX (RANGE SCAN)' },
  { depth: 3, line: 'top', open: true, i: <SigmaKey />, iw: 29, t: 'Access Predicates', tone: blue },
  { depth: 4, line: 'top', open: true, i: <AndIco />, iw: 21, t: 'AND', tone: blue },
  { depth: 5, line: 'full', leaf: true, iw: 21, t: `${pre}FNAME='John'`, tone: blue },
  { depth: 5, line: 'top', leaf: true, iw: 21, t: `${pre}LNAME='Smith'`, tone: blue },
  { depth: 1, line: 'top', iw: 21, t: 'Other XML', tone: '#76760a' },
];

/* only the first level has a later sibling, so only its column carries a guide */
const guidesFor = (depth) => Array.from({ length: depth }, (_, n) => n === 1);

function Plan({ pre = '', small, widths, data, step }) {
  return (
    <PlanTable $small={small}>
      <colgroup>{widths.map((x, n) => <Col key={n} $w={x} />)}</colgroup>
      <thead>
        <tr><th scope="col">OPERATION</th><th scope="col">OBJECT_NAME</th><th scope="col">CARDINALITY</th><th scope="col">COST</th></tr>
      </thead>
      <tbody>
        {planRows(pre).map((r, n) => (
          <tr key={n}>
            <td>
              <PlanCell $tone={r.tone}>
                {guidesFor(r.depth).map((on, k) => <Guide key={k} $w={step} $on={on} />)}
                <Branch $line={r.line}>
                  {!r.leaf && <Expander aria-label={r.t}><Box open={r.open} /></Expander>}
                </Branch>
                <PlanIcon $w={r.iw}>{r.i}</PlanIcon>
                {r.t}
              </PlanCell>
            </td>
            <td>{(data[n] || [])[0]}</td>
            <td>{(data[n] || [])[1]}</td>
            <td>{(data[n] || [])[2]}</td>
          </tr>
        ))}
      </tbody>
    </PlanTable>
  );
}

/* ---------- left window ---------- */

function PdfViewer() {
  return (
    <PdfWindow>
      <PdfTitle>
        <QuickBar>
          <Logo>
            <svg width="20" height="20" viewBox="0 0 20 20" aria-hidden="true"><rect width="20" height="20" rx="3" fill="#dc3838" /><text x="10" y="10" fontSize="7.500" fontWeight="bold" textAnchor="middle" fill="#fff">PDF</text><path d="M3 14h14M3 17h14" stroke="#fff" /></svg>
          </Logo>
          {[['열기', <QOpen />], ['저장', <QSave />], ['메일', <QMail />], ['인쇄', <QPrint />], ['찾기', <QFind />], ['실행 취소', <QTurn />], ['다시 실행', <QTurn flip />], ['기록', <QClock />]].map(([l, i]) => (
            <IconButton key={l} $w={23} aria-label={l}>{i}</IconButton>
          ))}
          <IconButton $w={14} aria-label="더 보기"><QMore /></IconButton>
        </QuickBar>
        <span>알PDF</span>
        <WindowButtons>
          <IconButton $w={29} aria-label="최소화"><Glyph s={12} box="0 0 12 12"><path d="M1 7h10" stroke="#fff" strokeWidth="2" /></Glyph></IconButton>
          <IconButton $w={29} aria-label="최대화"><Glyph s={12} box="0 0 12 12"><path d="M2 2.500h9v8H2z" stroke="#fff" /><path d="M1.500 2.500h10" stroke="#fff" strokeWidth="2.500" /></Glyph></IconButton>
          <IconButton $w={28} aria-label="닫기"><Glyph s={12} box="0 0 12 12"><path d="M2 2l8 8m0-8l-8 8" stroke="#fff" strokeWidth="2.400" /></Glyph></IconButton>
        </WindowButtons>
      </PdfTitle>

      <PdfMenu>
        <MenuTab $kind="file">파일</MenuTab>
        <MenuTab $kind="active">홈</MenuTab>
        {['보기', '검토', '편집', '페이지', '양식', '보안', '도움말'].map((t) => <MenuTab key={t}>{t}</MenuTab>)}
        <SearchPill>
          <Glass c="#c4c4c4" />
          <SearchInput placeholder="무엇을 하고 싶으세요?" aria-label="무엇을 하고 싶으세요?" />
        </SearchPill>
        <MenuChevron aria-label="리본 접기"><Glyph s={10} box="0 0 10 10"><path d="M1 7l4-4 4 4" stroke="#fff" strokeWidth="2" /></Glyph></MenuChevron>
      </PdfMenu>

      <Ribbon>
        {ribbonGroups.map((g, n) => (
          <RibbonGroup key={n}>
            {g.map((b) => (
              <RibbonItem key={b.t} $w={b.w} $active={b.active}>{b.i}{b.t}{b.more && <Tri c="#888" s={6} />}</RibbonItem>
            ))}
          </RibbonGroup>
        ))}
      </Ribbon>

      <PdfBody>
        <SideRail>
          <IconButton aria-label="축소판"><Glyph s={16}><path d="M1 2h7v6H1zM1 10h7v6H1z" fill="#b0b0b0" /><path d="M10 3h6M10 6.500h6M10 11h6M10 14.500h6" stroke="#b0b0b0" strokeWidth="1.200" /></Glyph></IconButton>
          <IconButton aria-label="책갈피"><Glyph s={16}><path d="M2 1h14v16H2z" fill="#a8a8a8" /><path d="M4 2h5v8L6.500 7.500 4 10z" fill="#fff" /></Glyph></IconButton>
          <IconButton aria-label="주석"><Glyph s={16}><path d="M2 1h14v12h-5l-2 4-2-4H2z" fill="#a8a8a8" /><path d="M5 4.500h8M5 7h8M5 9.500h8" stroke="#fff" strokeWidth="1.200" /></Glyph></IconButton>
          <IconButton aria-label="검색"><Glyph s={18}><circle cx="8.500" cy="8.500" r="7" stroke="#a8a8a8" strokeWidth="1.200" /><circle cx="8.500" cy="8.500" r="5.200" fill="#a8a8a8" /><path d="M13 13l3.500 3.500" stroke="#a8a8a8" strokeWidth="2" /></Glyph></IconButton>
        </SideRail>

        <Reader>
          <DocTabs>
            <IconButton $w={46} aria-label="홈"><Glyph s={16}><path d="M1 9.500L9 2l8 7.500h-2.500V16H11v-5H7v5H3.500V9.500z" fill="#777" /></Glyph></IconButton>
            <DocTab>lab10_w11_index<IconButton $w={14} aria-label="탭 닫기"><CloseX s={9} c="#777" /></IconButton></DocTab>
            <IconButton $w={28} aria-label="새 탭"><Glyph s={12} box="0 0 12 12"><path d="M6 0v12M0 6h12" stroke="#666" strokeWidth="1.600" /></Glyph></IconButton>
          </DocTabs>
          <ReaderView>
            <Pages>
              <Page>
                <SlideHeader>
                  <CourseTag>COMP322003</CourseTag>
                  <CourseTitle>Introduction to Database (Fall 2018)</CourseTitle>
                  <CourseTag $page>15</CourseTag>
                </SlideHeader>
                <SlideBody>
                  <SlideTitle>Lab #10: Playing with Indexes on <Code>COMPANY</Code></SlideTitle>
                  <SlideText>
                    1) Create an index, named<br />
                    <Code>employee_first_last_name_idx</Code>, on multiple columns<br />
                    of <Code>Fname</Code> and <Code>Lname</Code> on <Code>EMPLOYEE</Code>.
                  </SlideText>
                  <Bullets>
                    <Bullet><span>Show your execution plan using that index for a proper<br />query referencing those two columns (<Code>Fname</Code>, <Code>Lname</Code>).</span></Bullet>
                    <Bullet $sub><span>Capture your output as shown below:</span></Bullet>
                  </Bullets>
                  <Figure>
                    <FigureTabs>
                      <FigureTab><PlanIco s={16} />Explain Plan<button aria-label="닫기"><CloseX /></button></FigureTab>
                    </FigureTabs>
                    <FigureBar><Pin /><TextLink href="#sql">SQL</TextLink><Rule $m={4} />0 seconds</FigureBar>
                    <Plan
                      small
                      step={21}
                      pre="EMP."
                      widths={['314px', '191px', '121px', '78px']}
                      data={[['', 1, 2], ['EMPLOYEE', 1, 2], ['EMPLOYEE_FIRST_LAST_NAME_IDX', 1, 1]]}
                    />
                  </Figure>
                </SlideBody>
              </Page>
              <Page $last>
                <SlideHeader $tall>
                  <CourseTag $tall>COMP322003</CourseTag>
                  <CourseTitle $tall>Introduction to Database (Fall 2018)</CourseTitle>
                  <CourseTag $tall $page>16</CourseTag>
                </SlideHeader>
              </Page>
            </Pages>
            <VScroll>
              <Tri dir="up" c="#bbb" s={6} />
              <Track $vertical><Before $n={512} /><Thumb $n={36} /><Before $n={253} /></Track>
              <Tri c="#bbb" s={6} />
            </VScroll>
            <HScroll>
              <Tri dir="left" c="#bbb" s={8} />
              <Track><Before $n={96} /><Thumb $n={616} /><Before $n={112} /></Track>
              <Tri dir="right" c="#bbb" s={8} />
            </HScroll>
            <Corner />
          </ReaderView>
        </Reader>

        <RightRail>
          <IconButton aria-label="설정"><Glyph s={18}><g fill="#a8a8a8"><circle cx="9" cy="9" r="6" />{[0, 60, 120].map((a) => <rect key={a} x="6.500" y="1" width="5" height="16" rx="1" transform={`rotate(${a + 30} 9 9)`} />)}</g><circle cx="9" cy="9" r="3" fill="#fff" /></Glyph></IconButton>
        </RightRail>
      </PdfBody>

      <PdfStatus>
        검색
        <StatusGroup $gap={10} $left={110}>
          <Glass s={12} c="#fff" bw={2} />
          <Tri dir="up" s={10} />
          <Glyph s={12} box="0 0 12 12"><path d="M6 1l5 5H8v5H4V6H1z" fill="#f6aeae" /></Glyph>
          <Glyph s={12} box="0 0 12 12"><path d="M6 11L1 6h3V1h4v5h3z" fill="#f6aeae" /></Glyph>
        </StatusGroup>
        <StatusGroup $left={175}>
          <IconButton $w={20} aria-label="첫 페이지"><Glyph s={10} box="0 0 10 10"><path d="M0 0h2v10H0zM9 0v10L3 5z" fill="#fff" /></Glyph></IconButton>
          <IconButton $w={18} aria-label="이전 페이지"><Tri dir="left" s={11} /></IconButton>
          <PageBox defaultValue="15" aria-label="페이지" />
          <span>/ &nbsp;22</span>
          <StatusGroup $left={6}>
            <IconButton $w={20} aria-label="다음 페이지"><Tri dir="right" s={11} /></IconButton>
            <IconButton $w={20} aria-label="마지막 페이지"><Glyph s={10} box="0 0 10 10"><path d="M8 0h2v10H8zM1 0v10l6-5z" fill="#fff" /></Glyph></IconButton>
          </StatusGroup>
        </StatusGroup>
        <StatusGroup $gap={1} $left={92}>
          <IconButton aria-label="실제 크기"><Glyph s={14} box="0 0 14 14"><path d="M1 .5h12v13H1z" stroke="#fff" /></Glyph></IconButton>
          <IconButton aria-label="창에 맞춤"><Glyph s={14} box="0 0 14 14"><path d="M1 .5h12v13H1z" stroke="#fff" /><path d="M7 2l2 2H5zM7 12l2-2H5zM2.500 7l2-2v4zM11.500 7l-2-2v4z" fill="#fff" /></Glyph></IconButton>
          <IconButton aria-label="너비에 맞춤"><Glyph s={14} box="0 0 14 14"><path d="M3 3h8v8H3z" stroke="#fff" /><path d="M.5 3V.5H3M11 .5h2.500V3M13.500 11v2.500H11M3 13.500H.5V11" stroke="#fff" /></Glyph></IconButton>
        </StatusGroup>
        <StatusGroup $left={30}>
          <IconButton $w={20} aria-label="축소"><Glyph s={10} box="0 0 10 10"><path d="M0 5h10" stroke="#fff" strokeWidth="2" /></Glyph></IconButton>
          <Zoom type="range" defaultValue="50" aria-label="확대 비율" />
          <IconButton $w={20} aria-label="확대"><Glyph s={10} box="0 0 10 10"><path d="M0 5h10M5 0v10" stroke="#fff" strokeWidth="2" /></Glyph></IconButton>
        </StatusGroup>
        <StatusGroup $gap={8} $left={13}>100%<Tri /></StatusGroup>
      </PdfStatus>
    </PdfWindow>
  );
}

/* ---------- right window ---------- */

const dbFolders = [
  ['테이블(필터링됨)', 'table'], ['뷰', 'view'], ['뷰 편집', 'view'], ['인덱스', 'index'], ['패키지', 'pack'],
  ['프로시저', 'proc'], ['함수', 'func'], ['대기열', 'queue'], ['대기열 테이블', 'qtable'], ['트리거', 'trig'],
  ['Crossedition 트리거', 'trig'], ['유형', 'type'], ['시퀀스', 'seq'], ['구체화된 뷰', 'mview'], ['구체화된 뷰 로그', 'mlog'],
  ['동의어', 'syn'], ['공용 동의어', 'psyn'], ['데이터베이스 링크', 'link'], ['공용 데이터베이스 링크', 'link'],
];

const Node = ({ pad, line: l = 'full', open, icon, label, selected, root }) => (
  <TreeRow $pad={pad}>
    {!root && <Branch $line={l}><Expander aria-label={label}><Box open={open} /></Expander></Branch>}
    {icon}
    <TreeLabel $gap={selected ? 0 : 3} $selected={selected}>{label}</TreeLabel>
  </TreeRow>
);

const DockHead = ({ title }) => (
  <DockHeader>
    <DockTitle>{title}</DockTitle>
    <button aria-label="닫기"><CloseX c="#b5b5b5" s={6} /></button>
    <Rule $m={5} $h={13} />
    <IconButton $w={22} aria-label="최소화"><Glyph s={10} box="0 0 10 10"><rect x=".5" y="1" width="9" height="8" fill="#fff" stroke="#999" /><path d="M3 6.500h4" stroke="#777" strokeWidth="1.500" /></Glyph></IconButton>
  </DockHeader>
);

const Scroll = ({ vertical, a, b, c, end }) => (
  <JavaScroll $vertical={vertical} $end={end}>
    <Tri dir={vertical ? 'up' : 'left'} c="#aaa" />
    <JavaTrack $vertical={vertical}><Before $n={a} /><JavaThumb $n={b} $vertical={vertical} /><Before $n={c} /></JavaTrack>
    <Tri dir={vertical ? 'down' : 'right'} c="#aaa" />
  </JavaScroll>
);

const AppMark = ({ s = 16 }) => (
  <Glyph s={s}><rect x="1" y="1" width="13" height="15" rx="1" fill="#7da2dc" stroke="#dfeafb" /><path d="M1 6h13M1 11h13M5.500 1v15" stroke="#e8f0fc" strokeWidth="1.300" /><circle cx="12.500" cy="12" r="5" fill="#1fb51f" stroke="#0d7a0d" /><path d="M11 9.500l4 2.500-4 2.500z" fill="#fff" /></Glyph>
);

function SqlDeveloper() {
  const menus = [['파일(', 'F', ')'], ['편집(', 'E', ')'], ['보기(', 'V', ')'], ['이동(', 'N', ')'], ['실행(', 'R', ')'], ['소스', '', ''], ['팀(', 'M', ')'], ['도구(', 'T', ')'], ['', 'W', 'indow'], ['도움말(', 'H', ')']];
  return (
    <SqlWindow>
      <SqlTitle>
        <AppMark />Oracle SQL Developer : KNU
        <TitleButtons>
          <IconButton $w={46} aria-label="최소화"><Glyph s={11} box="0 0 11 11"><path d="M0 5.500h11" stroke="#000" /></Glyph></IconButton>
          <IconButton $w={46} aria-label="최대화"><Glyph s={11} box="0 0 11 11"><path d="M.5.5h10v10H.5z" stroke="#000" /></Glyph></IconButton>
          <IconButton $w={46} aria-label="닫기"><Glyph s={11} box="0 0 11 11"><path d="M.5.5l10 10m0-10l-10 10" stroke="#000" /></Glyph></IconButton>
        </TitleButtons>
      </SqlTitle>
      <SqlMenu>
        {menus.map(([a, k, b]) => <SqlMenuItem key={a + k}>{a}<u>{k}</u>{b}</SqlMenuItem>)}
      </SqlMenu>
      <MainTools>
        <IconButton aria-label="새로 만들기"><Glyph><path d="M2.500 2.500h12v14h-12z" fill="#f2f2fa" stroke="#555580" /><path d="M12.500 0l1.500 3 3.500 1.500L14 6l-1.500 3L11 6 7.500 4.500 11 3z" fill="#ffcf3a" stroke="#c43a12" /></Glyph></IconButton>
        <IconButton aria-label="열기"><Glyph><path d="M1.500 15V3.500h5l1 2h7V8" fill="#e9dd8a" stroke="#8a7a1c" /><path d="M1.500 15l3.500-7h12l-3.500 7z" fill="#f3ea9c" stroke="#8a7a1c" /></Glyph></IconButton>
        <IconButton $w={22} aria-label="저장"><Glyph s={16}><Disk /></Glyph></IconButton>
        <IconButton aria-label="모두 저장"><Glyph><Disk x={5} y={1} s={12} /><Disk x={1} y={5} s={12} /></Glyph></IconButton>
        <Gap $w={12} />
        <IconButton aria-label="실행 취소"><Curl c="#5aa5ea" d="#1d5fa8" /></IconButton>
        <IconButton aria-label="다시 실행"><Curl flip c="#a3a9b2" d="#8d949e" /></IconButton>
        <Gap $w={12} />
        <IconButton aria-label="뒤로"><Round left c="#21a021" d="#0b5e0b" /></IconButton>
        <IconButton $w={16} aria-label="뒤로 목록"><Tri c="#c9dcf0" /></IconButton>
        <IconButton aria-label="앞으로"><Round c="#8f8f8f" d="#6a6a6a" /></IconButton>
        <IconButton $w={16} aria-label="앞으로 목록"><Tri c="#77777c" /></IconButton>
        <Gap $w={13} />
        <IconButton aria-label="SQL 워크시트"><SqlIcon /></IconButton>
        <IconButton $w={16} aria-label="워크시트 목록"><Tri c="#c9dcf0" /></IconButton>
        <Gap $w={13} />
        <IconButton aria-label="찾기"><Glyph><path d="M5 2h3v4h2V2h3l4 9H1z" fill="#3c4450" stroke="#222" /><circle cx="4.500" cy="12.500" r="3.800" fill="#2f7de0" stroke="#222" /><circle cx="13.500" cy="12.500" r="3.800" fill="#2f7de0" stroke="#222" /></Glyph></IconButton>
      </MainTools>

      <SqlBody>
        <Docks>
          <Dock>
            <DockHead title="접속" />
            <DockTools>
              <IconButton aria-label="새 접속"><Glyph s={16}><path d="M6 1.500h6V6h4.500v6H12v4.500H6V12H1.500V6H6z" fill="#2fb52f" stroke="#0d7a0d" /></Glyph></IconButton>
              <IconButton $w={16} aria-label="접속 목록"><Tri c="#6a8fbd" /></IconButton>
              <IconButton $w={22} aria-label="새로 고침"><Glyph s={16}><g fill="#8cc3f5" stroke="#1d66b0"><path d="M1 15V4h6l-2 2.500 3 3v6H5v-5L3.500 9v6z" /><path d="M17 3v11h-6l2-2.500-3-3v-6h3v5l1.500 1.500V3z" /></g></Glyph></IconButton>
              <IconButton $w={22} aria-label="필터"><Glyph s={16}><path d="M1.500 2h15L11 9v7.500L7 14V9z" fill="#dcdcf2" stroke="#55559c" strokeWidth="1.200" /></Glyph></IconButton>
              <IconButton $w={22} aria-label="모두 축소"><Glyph s={16}><g fill="#d5e6fa" stroke="#3a78c8"><rect x="1.500" y="1.500" width="10" height="8" /><rect x="6.500" y="8.500" width="10" height="8" /></g><path d="M4 5.500h5M9 12.500h5" stroke="#2a5ea8" strokeWidth="1.400" /></Glyph></IconButton>
            </DockTools>
            <DockBody>
              <Tree>
                <Node root pad={4} icon={<DbPlug />} label="접속" />
                <Node pad={8} icon={<DbIcon />} label="hr" />
                <Node pad={8} line="top" open icon={<DbPlug />} label="KNU" selected />
                {dbFolders.map(([t, k]) => <Node key={t} pad={28} icon={<Folder kind={k} />} label={t} />)}
              </Tree>
              <Scroll vertical a={0} b={240} c={124} />
            </DockBody>
            <Scroll a={1} b={103} c={32} end={17} />
          </Dock>
          <Dock $light>
            <DockHead title="보고서" />
            <DockBody>
              <Tree>
                <Node root pad={4} icon={<AllReports />} label="모든 보고서" />
                {['Data Modeler 보고서', 'OLAP 보고서', 'TimesTen 보고서', '데이터 딕셔너리 보고서', '사용자 정의 보고서'].map((t, n) => (
                  <Node key={t} pad={8} line={n === 4 ? 'top' : 'full'} icon={<ReportFolder />} label={t} />
                ))}
              </Tree>
            </DockBody>
            <Scroll a={1} b={139} c={4} />
          </Dock>
        </Docks>

        <Work>
          <FileTabs>
            <FileTab><Glyph s={16}><circle cx="9" cy="9" r="8" fill="#4a90e0" stroke="#1d5fa8" /><text x="9" y="13.500" fontSize="13" fontWeight="bold" textAnchor="middle" fill="#fff">?</text></Glyph>시작 페이지<button aria-label="탭 닫기"><CloseX c="#c5d5e6" /></button></FileTab>
            <FileTab $active><SqlIcon />KNU<button aria-label="탭 닫기"><CloseX c="#b5b5b5" /></button></FileTab>
            <TabMenu aria-label="탭 목록"><Tri c="#e6eff9" /></TabMenu>
          </FileTabs>
          <WorkBox>
            <EditTools>
              <IconButton aria-label="명령문 실행"><Run s={16} /></IconButton>
              <IconButton aria-label="스크립트 실행"><ScriptIcon s={16} /></IconButton>
              <IconButton $w={22} aria-label="계획 설명"><PlanIco s={16} /></IconButton>
              <IconButton $w={16} aria-label="계획 목록"><Tri c="#6a8fbd" /></IconButton>
              <IconButton $w={22} aria-label="자동 추적"><PlanIco play s={16} /></IconButton>
              <IconButton aria-label="SQL 튜닝"><Glyph s={16}><Cyl x={1} y={1} /><path d="M8 6l2 2-1 2 7 6 1.500-1.500-6-7-2 .5-1.500-2z" fill="#ddd" stroke="#555" /></Glyph></IconButton>
              <Rule $m={5} />
              <IconButton $w={20} aria-label="커밋"><Glyph s={16}><Cyl x={1} y={1} /><path d="M6 11l3.500 4 8-8" stroke="#2fb52f" strokeWidth="3" /></Glyph></IconButton>
              <IconButton $w={26} aria-label="롤백"><Glyph s={16}><Cyl x={1} y={1} /><path d="M6 12l5-4v2c4 0 6 2 6 6-1.500-2-3-3-6-3v3z" fill="#e0382a" stroke="#8a0f0a" strokeWidth=".7" /></Glyph></IconButton>
              <Rule $m={4} />
              <IconButton $w={22} aria-label="공유되지 않은 워크시트"><SqlIcon star /></IconButton>
              <IconButton aria-label="대소문자"><Glyph><text x="9" y="10" fontSize="12" fontFamily="Liberation Serif" textAnchor="middle" fill="#111">Aa</text><path d="M3 14l4-3v2h4v-2l4 3-4 3v-2H7v2z" fill="#2fb52f" /></Glyph></IconButton>
              <IconButton $w={22} aria-label="지우기"><Glyph s={16}><path d="M2 13l9-10 5 2-9 11z" fill="#e8832a" stroke="#6a2a0a" /><path d="M2 13l3-3.500 5 2.500-3 4z" fill="#f8d8b8" stroke="#6a2a0a" /></Glyph></IconButton>
              <IconButton aria-label="SQL 내역"><Glyph s={16}><path d="M6 1.500h10v14H6z" fill="#dfe4f6" stroke="#5b6bb0" /><path d="M11 4h4M12 7h3M12 10h3" stroke="#5b6bb0" /><circle cx="7" cy="10.500" r="5.500" fill="#cfe6fc" stroke="#2a6fc0" strokeWidth="1.300" /><path d="M7 7v4h3" stroke="#2a6fc0" /></Glyph></IconButton>
              <IconButton $w={22} aria-label="도구"><Glyph s={16}><path d="M1 15l7-8c-1-4 2-6 5-5l-2 3 1 2h4c1 4-3 5-5 4l-6 7z" fill="#aaa" /><rect x="12" y="8" width="4" height="3" fill="#999" /><rect x="12" y="13" width="4" height="3" fill="#999" /></Glyph></IconButton>
              <Rule $m={5} />
              <ConnPicker>
                <DbPlug />
                <ConnSelect aria-label="접속"><option>KNU</option></ConnSelect>
                <Tri c="#5f86b8" />
              </ConnPicker>
            </EditTools>
            <Frame>
              <Worksheet>
                <SubTabs><SubTab $w={73} $active>워크시트</SubTab><SubTab $w={80}>질의 작성기</SubTab></SubTabs>
                <EditorRow>
                  <Editor>
                    <Gutter />
                    <Script contentEditable suppressContentEditableWarning spellCheck={false} role="textbox" aria-multiline="true" aria-label="워크시트">
                      <CodeLine><Kw>CREATE</Kw> <Kw>INDEX</Kw> EMPLOYEE_FIRST_LAST_NAME_IDX <Kw>ON</Kw> EMPLOYEE(FNAME, LNAME);</CodeLine>
                      <CodeLine $current><Kw $warn>SELECT</Kw> <Kw $warn>*</Kw> <Kw>FROM</Kw> EMPLOYEE <Kw>WHERE</Kw> FNAME = <Str>'John'</Str> <Kw>AND</Kw> LNAME = <Str>'Smith'</Str>;</CodeLine>
                    </Script>
                  </Editor>
                  <Ruler />
                </EditorRow>
              </Worksheet>
              <Splitter><Tri dir="up" c="#000" s={10} /><Tri c="#000" s={10} /></Splitter>
              <Results>
                <ResultTabs>
                  <ResultTab><ScriptIcon s={16} />스크립트 출력<button aria-label="닫기"><CloseX c="#777" s={6} /></button></ResultTab>
                  <ResultTab><Run s={14} c="#8fd68a" />질의 결과<button aria-label="닫기"><CloseX c="#777" s={6} /></button></ResultTab>
                  <ResultTab $active><PlanIco s={16} />계획 설명<button aria-label="닫기"><CloseX c="#777" s={6} /></button></ResultTab>
                </ResultTabs>
                <ResultTools><Pin /><TextLink href="#sql">SQL</TextLink><Rule />0초</ResultTools>
                <TableView>
                  <Plan
                    widths={['300px', '200px', '200px', 'auto']}
                    step={20}
                    data={[['', 1], ['EMPLOYEE', 1], ['EMPLOYEE_FIRST_LAST_NAME_IDX', 1]]}
                  />
                </TableView>
                <Scroll a={0} b={636} c={110} end={5} />
              </Results>
            </Frame>
          </WorkBox>
        </Work>
      </SqlBody>

      <SqlStatus>
        <Gap $w={6} />
        <Glyph s={12} box="0 0 12 12"><path d="M3 8H.5V.5h8V4M4.500 4.500h7v7h-7z" stroke="#d7e5f4" /></Glyph>
        <LogButton>
          <Glyph s={15}><rect x="1" y="1" width="16" height="16" fill="#fff" stroke="#44558c" strokeWidth="1.400" /><path d="M4 5h3M4 9h3M4 13h3M9 13h5" stroke="#2a6fc0" strokeWidth="1.500" /><path d="M9 5h5M9 9h5" stroke="#e0482a" strokeWidth="1.500" /></Glyph>
          메시지 - 로그
        </LogButton>
        <Hint>"선언으로 이동"을 수행하려면 Ctrl 키를 누른 상태에서 식별자를 누르십시오.</Hint>
        <StatusCells>
          <StatusCell $w={89}><Rule $c="#fff" />2 행 65 열</StatusCell>
          <StatusCell $w={63}><Rule $c="#fff" />삽입</StatusCell>
          <StatusCell $w={47}><Rule $c="#fff" />수정됨</StatusCell>
          <StatusCell $w={79}><Rule $c="#fff" />Windows: CR</StatusCell>
        </StatusCells>
        <Glyph s={9} box="0 0 9 9"><path d="M0 9l9-9M3.500 9L9 3.500M7 9l2-2" stroke="#e3ecd8" /></Glyph>
      </SqlStatus>
    </SqlWindow>
  );
}

/* ---------- taskbar ---------- */

const T = ({ children, s = 24 }) => <Glyph s={s} box="0 0 24 24">{children}</Glyph>;

const tasks = [
  ['시작', <T s={16}><path d="M0 3.500L10 2v9.500H0zM11.500 1.800L24 0v11.500H11.500zM0 13h10v9.500L0 21zM11.500 13H24v11l-12.500-1.800z" fill="#fff" /></T>],
  ['검색', <T s={20}><circle cx="14" cy="9" r="6.500" stroke="#fff" strokeWidth="1.500" /><path d="M9.500 14L3 21" stroke="#fff" strokeWidth="1.800" /></T>],
  ['작업 보기', <T s={22}><rect x="6" y="5" width="12" height="14" stroke="#fff" strokeWidth="1.300" /><path d="M5 8H2v8h3M19 8h3v8h-3" stroke="#fff" strokeWidth="1.300" /></T>],
  ['Chrome', <T><circle cx="12" cy="12" r="11" fill="#fbc116" /><path d="M2.500 6.500a11 11 0 0119 0H12z" fill="#ea4335" /><path d="M2.500 6.500A11 11 0 0011 23l5-8.500-9-1z" fill="#34a853" /><path d="M2.500 6.500L7.500 15 12 6.500z" fill="#ea4335" /><path d="M2.500 6.500l5 8.500 3 2L11 23A11 11 0 012.500 6.500z" fill="#34a853" /><circle cx="12" cy="12" r="5.200" fill="#fff" /><circle cx="12" cy="12" r="4.200" fill="#4285f4" /></T>, 'open'],
  ['파일 탐색기', <T><path d="M1 3h8l2 2h12v17H1z" fill="#f6d36b" /><path d="M1 7h22v14H1z" fill="#fde493" /><path d="M4 13h16v9h-4v-5H8v5H4z" fill="#3fa9e0" /></T>, 'open'],
  ['Edge', <T><path d="M1 11C2 4 7 1 12.500 1 19 1 23 6 23 11.500V14H8.500c.3 3 3 4.800 6.500 4.800 2.500 0 4.800-.7 7-2v4.700c-2 1.200-4.500 1.700-7.300 1.700C8 23.200 4 19.500 4 14c0-3.500 2-6.500 5-8-4 .5-6.500 2.500-8 5zm7.700-1.200h7.700c0-3-1.400-4.500-3.800-4.500-2.300 0-3.600 1.700-3.900 4.500z" fill="#0a78d6" /></T>],
  ['Store', <T><path d="M8 6V4a4 4 0 018 0v2" stroke="#fff" strokeWidth="1.500" /><rect x="1" y="6" width="22" height="17" rx="1" fill="#fff" /><path d="M7 9h4.500v4.500H7z" fill="#f25022" /><path d="M12.500 9H17v4.500h-4.500z" fill="#7fba00" /><path d="M7 14.500h4.500V19H7z" fill="#00a4ef" /><path d="M12.500 14.500H17V19h-4.500z" fill="#ffb900" /></T>],
  ['메일', <T><path d="M0 9l12-7 12 7v13H0z" fill="#fff" /><path d="M2 9.500h20L13.500 16l-3-2 1-3z" fill="#47351c" /></T>],
  ['명령 프롬프트', <T s={22}><rect x="0" y="2" width="24" height="20" fill="#111" stroke="#999" /><path d="M0 2h24v3H0z" fill="#ddd" /><text x="2" y="13" fontSize="7" fontFamily="Liberation Mono" fill="#fff">C:\_</text></T>],
  ['Visual Studio', <T><path d="M16 0l7 2.500v19L16 24z" fill="#68217a" /><path fillRule="evenodd" d="M17 0l6 2.500v19L17 24 8.500 15.500 3.500 19.500 1 18V6l2.500-1.500 5 4zM4 9v6l3-3zm13-2l-6 5 6 5z" fill="#f3e9f8" /><path d="M17 0l6 2.500v19L17 24z" fill="#68217a" /><path d="M17 0v7l-6 5-2.500-3.500zM17 24v-7l-6-5-2.500 3.500z" fill="#8a4fc4" /></T>],
  ['Visual Studio', <T><path d="M7 7.500c3 0 7 9 10.500 9a4.500 4.500 0 000-9C14 7.500 10 16.500 6.500 16.500a4.500 4.500 0 01.5-9z" stroke="#5a50b8" strokeWidth="3.200" /><path d="M14 9c1-1 2-1.500 3.500-1.500a4.500 4.500 0 010 9" stroke="#3a8fd0" strokeWidth="3.200" /></T>],
  ['PowerPoint', <T><path d="M1 1h20v22H1z" fill="#f4e3d8" /><path d="M1 1h14v22H1z" fill="#e8622a" /><text x="8" y="18" fontSize="17" fontWeight="bold" textAnchor="middle" fill="#fff">P</text><circle cx="17" cy="17" r="5" fill="#f7b79a" stroke="#e8622a" /></T>],
  ['KakaoTalk', <T><rect width="24" height="24" fill="#fae100" /><ellipse cx="12" cy="11.500" rx="9" ry="7.500" fill="#3a2a12" /><path d="M9 17l-1 4 4-3z" fill="#3a2a12" /><text x="12" y="14" fontSize="6" fontWeight="bold" textAnchor="middle" fill="#fae100">TALK</text></T>],
  ['알PDF', <T><circle cx="8" cy="4.500" r="3.500" fill="#eee" /><circle cx="16" cy="4.500" r="3.500" fill="#eee" /><circle cx="9" cy="4.500" r="1.500" fill="#111" /><circle cx="15" cy="4.500" r="1.500" fill="#111" /><rect x="4" y="7" width="16" height="16" rx="1" fill="#dc2f2f" /><circle cx="3" cy="13" r="2" fill="#f2c9a0" /><circle cx="21" cy="13" r="2" fill="#f2c9a0" /><text x="12" y="15" fontSize="7" fontWeight="bold" textAnchor="middle" fill="#fff">PDF</text><path d="M7 18h10M7 20.500h10" stroke="#fff" /></T>, 'open'],
  ['SQL Developer', <AppMark s={24} />, 'active'],
];

function TaskbarArea() {
  return (
    <Taskbar>
      {tasks.map(([l, i, st], n) => (
        <TaskButton key={n} aria-label={l} $open={st === 'open'} $active={st === 'active'}>{i}</TaskButton>
      ))}
      <Tray>
        <TrayButton $w={44} aria-label="피플"><T s={18}><circle cx="8" cy="11" r="4" stroke="#fff" strokeWidth="1.800" /><path d="M2 23c0-9 11-9 12 0" stroke="#fff" strokeWidth="1.800" /><circle cx="17" cy="5" r="4" stroke="#fff" strokeWidth="1.800" /><path d="M14 11c4-2 8 0 9 5" stroke="#fff" strokeWidth="1.800" /></T></TrayButton>
        <TrayButton $w={28} aria-label="숨겨진 아이콘"><T s={13}><path d="M1 17L12 6l11 11" stroke="#fff" strokeWidth="2.500" /></T></TrayButton>
        <TrayButton $w={22} aria-label="네트워크"><T s={18}><path d="M6 5h17v12H8M15 17v5M10 22h9" stroke="#fff" strokeWidth="1.700" /><path d="M1 2h6v6H1zM4 8v13" stroke="#fff" strokeWidth="1.700" /></T></TrayButton>
        <TrayButton $w={24} aria-label="음소거"><T s={16}><path d="M1 8h5l6-6v20l-6-6H1z" stroke="#fff" strokeWidth="1.700" /><path d="M16 9l6 6m0-6l-6 6" stroke="#fff" strokeWidth="1.900" /></T></TrayButton>
        <TrayButton $w={23} $big aria-label="입력 언어">A</TrayButton>
        <Clock>오후 12:40<br />2018-11-15</Clock>
        <TrayButton $w={18} aria-label="알림"><T s={18}><path d="M2 2h20v17h-7l-3 3-3-3H2z" stroke="#fff" strokeWidth="1.700" /></T></TrayButton>
      </Tray>
      <ShowDesktop aria-label="바탕 화면 보기" />
    </Taskbar>
  );
}

export default function App() {
  return (
    <Desktop>
      <GlobalStyle />
      <Windows>
        <PdfViewer />
        <SqlDeveloper />
      </Windows>
      <TaskbarArea />
    </Desktop>
  );
}
